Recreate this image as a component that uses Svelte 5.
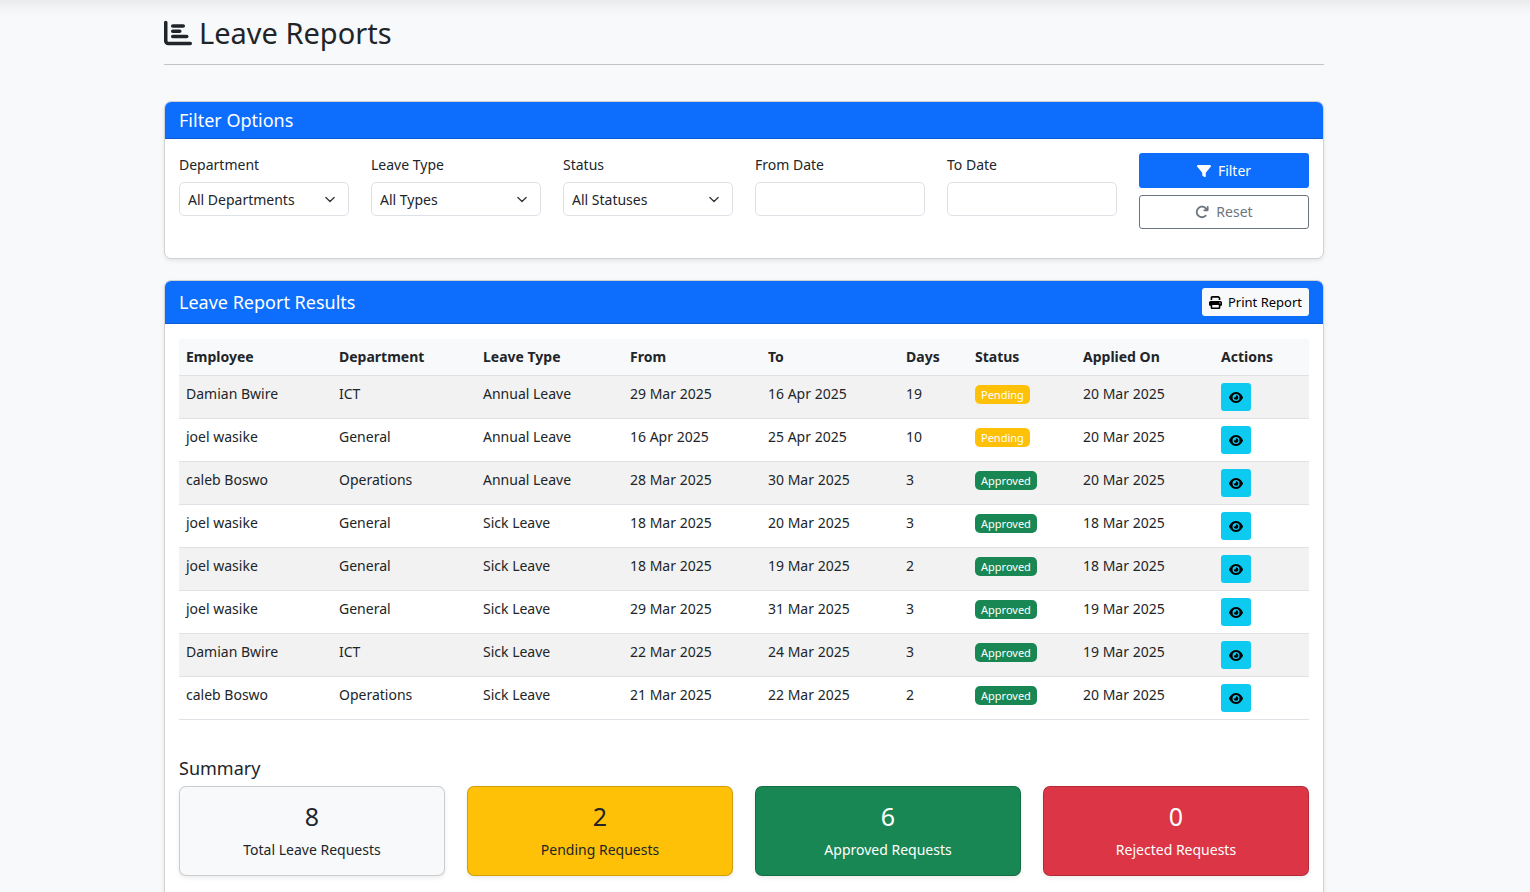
<script>
  const filters = [
    { id: 'department', label: 'Department', options: ['All Departments', 'General', 'ICT', 'Operations'] },
    { id: 'leave-type', label: 'Leave Type', options: ['All Types', 'Annual Leave', 'Sick Leave'] },
    { id: 'status', label: 'Status', options: ['All Statuses', 'Pending', 'Approved', 'Rejected'] },
    { id: 'from-date', label: 'From Date' },
    { id: 'to-date', label: 'To Date' }
  ];

  const columns = ['Employee', 'Department', 'Leave Type', 'From', 'To', 'Days', 'Status', 'Applied On', 'Actions'];

  const rows = [
    ['Damian Bwire', 'ICT', 'Annual Leave', '29 Mar 2025', '16 Apr 2025', 19, 'Pending', '20 Mar 2025'],
    ['joel wasike', 'General', 'Annual Leave', '16 Apr 2025', '25 Apr 2025', 10, 'Pending', '20 Mar 2025'],
    ['caleb Boswo', 'Operations', 'Annual Leave', '28 Mar 2025', '30 Mar 2025', 3, 'Approved', '20 Mar 2025'],
    ['joel wasike', 'General', 'Sick Leave', '18 Mar 2025', '20 Mar 2025', 3, 'Approved', '18 Mar 2025'],
    ['joel wasike', 'General', 'Sick Leave', '18 Mar 2025', '19 Mar 2025', 2, 'Approved', '18 Mar 2025'],
    ['joel wasike', 'General', 'Sick Leave', '29 Mar 2025', '31 Mar 2025', 3, 'Approved', '19 Mar 2025'],
    ['Damian Bwire', 'ICT', 'Sick Leave', '22 Mar 2025', '24 Mar 2025', 3, 'Approved', '19 Mar 2025'],
    ['caleb Boswo', 'Operations', 'Sick Leave', '21 Mar 2025', '22 Mar 2025', 2, 'Approved', '20 Mar 2025']
  ];

  const stats = [
    { value: 8, label: 'Total Leave Requests', tone: 'light' },
    { value: 2, label: 'Pending Requests', tone: 'warning' },
    { value: 6, label: 'Approved Requests', tone: 'success' },
    { value: 0, label: 'Rejected Requests', tone: 'danger' }
  ];
</script>

<main>
  <div class="container">
    <h1>
      <svg class="icon-title" viewBox="0 0 512 512" aria-hidden="true"><path d="M32 32c17.7 0 32 14.3 32 32V400c0 8.8 7.2 16 16 16H480c17.7 0 32 14.3 32 32s-14.3 32-32 32H80c-44.2 0-80-35.8-80-80V64C0 46.3 14.3 32 32 32zm96 96c0-17.7 14.3-32 32-32l192 0c17.7 0 32 14.3 32 32s-14.3 32-32 32l-192 0c-17.7 0-32-14.3-32-32zm32 64H288c17.7 0 32 14.3 32 32s-14.3 32-32 32H160c-17.7 0-32-14.3-32-32s14.3-32 32-32zm0 96H416c17.7 0 32 14.3 32 32s-14.3 32-32 32H160c-17.7 0-32-14.3-32-32s14.3-32 32-32z" /></svg>
      Leave Reports
    </h1>
    <hr />

    <section class="card">
      <header class="card-header"><h2>Filter Options</h2></header>
      <form class="card-body filters" onsubmit={(e) => e.preventDefault()}>
        {#each filters as f}
          <div class="field">
            <label for={f.id}>{f.label}</label>
            {#if f.options}
              <select id={f.id}>
                {#each f.options as o}<option>{o}</option>{/each}
              </select>
            {:else}
              <input id={f.id} type="text" />
            {/if}
          </div>
        {/each}
        <div class="actions">
          <button class="btn primary" type="submit">
            <svg class="icon" viewBox="0 0 512 512" aria-hidden="true"><path d="M3.9 54.9C10.5 40.9 24.5 32 40 32H472c15.5 0 29.5 8.9 36.1 22.9s4.6 30.5-5.2 42.5L320 320.9V448c0 12.1-6.8 23.2-17.7 28.6s-23.8 4.3-33.5-3l-64-48c-8.1-6-12.8-15.5-12.8-25.6V320.9L9 97.3C-.7 85.4-2.8 68.8 3.9 54.9z" /></svg>
            Filter
          </button>
          <button class="btn outline" type="reset">
            <svg class="icon" viewBox="0 0 512 512" aria-hidden="true"><path d="M386.3 160H336c-17.7 0-32 14.3-32 32s14.3 32 32 32H464c17.7 0 32-14.3 32-32V64c0-17.7-14.3-32-32-32s-32 14.3-32 32v51.2L414.4 97.6c-87.5-87.5-229.3-87.5-316.8 0s-87.5 229.3 0 316.8s229.3 87.5 316.8 0c12.5-12.5 12.5-32.8 0-45.3s-32.8-12.5-45.3 0c-62.5 62.5-163.8 62.5-226.3 0s-62.5-163.8 0-226.3s163.8-62.5 226.3 0L386.3 160z" /></svg>
            Reset
          </button>
        </div>
      </form>
    </section>

    <section class="card">
      <header class="card-header">
        <h2>Leave Report Results</h2>
        <button class="btn print" type="button">
          <svg class="icon-small" viewBox="0 0 512 512" aria-hidden="true"><path d="M128 0C92.7 0 64 28.7 64 64v96h64V64H354.7L384 93.3V160h64V93.3c0-17-6.7-33.3-18.7-45.3L400 18.7C388 6.7 371.7 0 354.7 0H128zM384 352v32 64H128V384 368 352H384zm64 32h32c17.7 0 32-14.3 32-32V256c0-35.3-28.7-64-64-64H64c-35.3 0-64 28.7-64 64v96c0 17.7 14.3 32 32 32H64v64c0 35.3 28.7 64 64 64H384c35.3 0 64-28.7 64-64V384zM432 248a24 24 0 1 1 0 48 24 24 0 1 1 0-48z" /></svg>
          Print Report
        </button>
      </header>
      <div class="card-body results">
        <table>
          <colgroup>
            <col class="c-employee" /><col class="c-department" /><col class="c-type" />
            <col class="c-date" /><col class="c-date" /><col class="c-days" />
            <col class="c-status" /><col class="c-date" /><col class="c-actions" />
          </colgroup>
          <thead>
            <tr>{#each columns as c}<th scope="col">{c}</th>{/each}</tr>
          </thead>
          <tbody>
            {#each rows as row}
              <tr>
                {#each row as cell, i}
                  <td>
                    {#if i === 6}
                      <span class="badge" class:pending={cell === 'Pending'}>{cell}</span>
                    {:else}{cell}{/if}
                  </td>
                {/each}
                <td>
                  <button class="view" type="button" aria-label="View">
                    <svg viewBox="0 0 576 512" aria-hidden="true"><path d="M288 32c-80.8 0-145.5 36.8-192.6 80.6C48.6 156 17.3 208 2.5 243.7c-3.3 7.9-3.3 16.7 0 24.6C17.3 304 48.6 356 95.4 399.4C142.5 443.2 207.2 480 288 480s145.5-36.8 192.6-80.6c46.8-43.5 78.1-95.4 93-131.1c3.3-7.9 3.3-16.7 0-24.6c-14.9-35.7-46.2-87.7-93-131.1C433.5 68.8 368.8 32 288 32zM144 256a144 144 0 1 1 288 0 144 144 0 1 1-288 0zm144-64c0 35.3-28.7 64-64 64c-7.1 0-13.9-1.2-20.3-3.3c-5.5-1.8-11.9 1.6-11.7 7.4c.3 6.9 1.3 13.8 3.2 20.7c13.7 51.2 66.4 81.6 117.6 67.9s81.6-66.4 67.9-117.6c-11.1-41.5-47.8-69.4-88.6-71.1c-5.8-.2-9.2 6.1-7.4 11.7c2.1 6.4 3.3 13.2 3.3 20.3z" /></svg>
                  </button>
                </td>
              </tr>
            {/each}
          </tbody>
        </table>

        <h2 class="summary-title">Summary</h2>
        <div class="stats">
          {#each stats as s}
            <div class="stat {s.tone}">
              <strong>{s.value}</strong>
              <p>{s.label}</p>
            </div>
          {/each}
        </div>
      </div>
    </section>
  </div>
</main>

<style>
  :global(body) {
    margin: 0;
    background: #f8f9fa;
  }
  main {
    padding: 16px 42px 0 0;
    color: #212529;
    font: 14px/22px "Noto Sans", sans-serif;
  }
  main::before {
    content: "";
    position: absolute;
    inset: 0 0 auto 0;
    height: 16px;
    background: linear-gradient(rgba(0, 0, 0, 0.06), rgba(0, 0, 0, 0.02) 55%, rgba(0, 0, 0, 0));
  }
  .container {
    max-width: 1160px;
    margin: 0 auto;
  }
  h1, h2, p {
    margin: 0;
    font-weight: 400;
  }
  h1 {
    display: flex;
    align-items: center;
    gap: 7px;
    font-size: 29px;
    line-height: 34px;
  }
  h2 {
    font-size: 18px;
    line-height: 22px;
  }
  svg {
    display: block;
    fill: currentColor;
  }
  .icon-title {
    width: 28px;
    height: 28px;
  }
  .icon {
    width: 14px;
    height: 14px;
  }
  .icon-small {
    width: 13px;
    height: 13px;
  }
  hr {
    height: 1px;
    margin: 14px 0 36px;
    border: 0;
    background: #c2c4c6;
  }
  .card {
    margin-bottom: 21px;
    border: 1px solid #d0d1d2;
    border-radius: 7px;
    background: #fff;
    box-shadow: 0 2px 4px rgba(0, 0, 0, 0.08);
  }
  .card-header {
    display: flex;
    align-items: center;
    justify-content: space-between;
    padding: 7px 14px;
    border-bottom: 1px solid #0b5bd1;
    border-radius: 6px 6px 0 0;
    background: #0d6efd;
    color: #fff;
  }
  .card-body {
    padding: 14px;
  }
  .filters {
    display: grid;
    grid-template-columns: repeat(6, 1fr);
    gap: 22px;
    padding-bottom: 29px;
  }
  .field, .actions {
    display: flex;
    flex-direction: column;
    min-width: 0;
  }
  .field {
    gap: 5px;
  }
  .actions {
    gap: 7px;
  }
  label {
    line-height: 24px;
  }
  select, input {
    box-sizing: border-box;
    width: 100%;
    height: 34px;
    padding: 1px 8px 0;
    border: 1px solid #dee2e6;
    border-radius: 5px;
    background: #fff;
    color: inherit;
    font: inherit;
  }
  select {
    appearance: none;
    padding-right: 28px;
    background: #fff url("data:image/svg+xml,%3csvg xmlns='http://www.w3.org/2000/svg' viewBox='0 0 16 16'%3e%3cpath fill='none' stroke='%23343a40' stroke-linecap='round' stroke-linejoin='round' stroke-width='2' d='m2 5 6 6 6-6'/%3e%3c/svg%3e") no-repeat right 11px center / 14px 11px;
  }
  .btn {
    display: flex;
    align-items: center;
    justify-content: center;
    gap: 7px;
    box-sizing: border-box;
    height: 35px;
    border: 1px solid transparent;
    border-radius: 3px;
    font: inherit;
  }
  .primary {
    background: #0d6efd;
    color: #fff;
  }
  .outline {
    height: 34px;
    border-color: #6c757d;
    background: #fff;
    color: #6c757d;
  }
  .print {
    gap: 6px;
    height: 28px;
    padding: 0 6px;
    background: #f8f9fa;
    color: #000;
    font-size: 13px;
  }
  table {
    width: 100%;
    table-layout: fixed;
    border-collapse: collapse;
  }
  .c-employee { width: 153px; }
  .c-department { width: 144px; }
  .c-type { width: 147px; }
  .c-date { width: 138px; }
  .c-days { width: 69px; }
  .c-status { width: 108px; }
  .c-actions { width: 95px; }
  th, td {
    padding: 7px;
    border-bottom: 1px solid #dee2e6;
    text-align: left;
    vertical-align: top;
  }
  th {
    background: #f8f9fa;
    font-weight: 700;
  }
  tbody tr:nth-child(odd) {
    background: #f2f2f2;
  }
  .results {
    padding-top: 15px;
    padding-bottom: 36px;
  }
  .badge {
    display: inline-block;
    padding: 0 6px;
    border-radius: 5px;
    background: #198754;
    color: #fff;
    font-size: 11px;
    line-height: 19px;
  }
  .pending {
    background: #ffc107;
  }
  .view {
    display: flex;
    align-items: center;
    justify-content: center;
    width: 30px;
    height: 28px;
    padding: 0;
    border: 0;
    border-radius: 3px;
    background: #0dcaf0;
    color: #000;
  }
  .view svg {
    width: 14px;
    height: 13px;
  }
  .summary-title {
    margin: 37px 0 7px;
  }
  .stats {
    display: grid;
    grid-template-columns: repeat(4, 1fr);
    gap: 22px;
  }
  .stat {
    padding: 14px;
    border: 1px solid rgba(0, 0, 0, 0.18);
    border-radius: 7px;
    box-shadow: 0 2px 4px rgba(0, 0, 0, 0.08);
    text-align: center;
  }
  .stat strong {
    display: block;
    margin-bottom: 7px;
    font-size: 25px;
    font-weight: 400;
    line-height: 31px;
  }
  .light { background: #f8f9fa; }
  .warning { background: #ffc107; }
  .success { background: #198754; color: #fff; }
  .danger { background: #dc3545; color: #fff; }
</style>
